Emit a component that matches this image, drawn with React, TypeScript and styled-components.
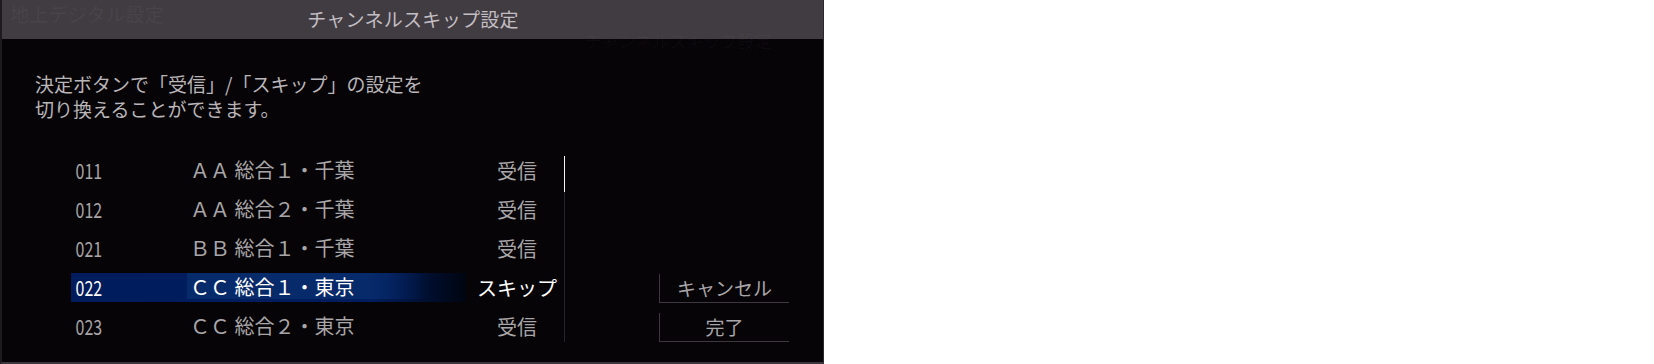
import React from "react";
import styled, { createGlobalStyle } from "styled-components";

const GlobalStyle = createGlobalStyle`
  html, body {
    margin: 0;
    padding: 0;
    background: #ffffff;
  }
  body {
    font-family: "Noto Sans CJK JP", "Noto Sans", sans-serif;
  }
`;

interface Channel {
  no: string;
  name: string;
  status: string;
}

const channels: Channel[] = [
  { no: "011", name: "ＡＡ 総合１・千葉", status: "受信" },
  { no: "012", name: "ＡＡ 総合２・千葉", status: "受信" },
  { no: "021", name: "ＢＢ 総合１・千葉", status: "受信" },
  { no: "022", name: "ＣＣ 総合１・東京", status: "スキップ" },
  { no: "023", name: "ＣＣ 総合２・東京", status: "受信" },
];

const Panel = styled.div`
  position: relative;
  width: 821px;
  height: 362px;
  background: #060406;
  border-left: 2px solid #1e1b1f;
  border-right: 1px solid #2c292d;
  border-bottom: 2px solid #3a363b;
  overflow: hidden;
`;

const Header = styled.div`
  position: relative;
  height: 39px;
  background: #413b42;
  padding-left: 1px;
  text-align: center;
  font-size: 19px;
  line-height: 37px;
  color: #c2bec2;
  letter-spacing: 0.3px;
`;

const GhostCrumb = styled.div`
  position: absolute;
  left: 8px;
  top: 1px;
  font-size: 19px;
  line-height: 26px;
  color: #49434a;
`;

const GhostTitle = styled.div`
  position: absolute;
  left: 583px;
  top: 28px;
  font-size: 17px;
  line-height: 26px;
  color: rgba(255, 255, 255, 0.03);
  pointer-events: none;
`;

const Description = styled.p`
  margin: 0;
  padding: 32px 0 0 33px;
  font-size: 19px;
  line-height: 25px;
  color: #b9b5b9;
`;

const Body = styled.div`
  display: flex;
  margin-top: 35px;
  height: 186px;
`;

const List = styled.div`
  display: flex;
  flex-direction: column;
  gap: 10px;
  margin-left: 69px;
  width: 493px;
`;

const Row = styled.div<{ $active: boolean }>`
  display: grid;
  grid-template-columns: 116px 283px 94px;
  height: 29px;
  align-items: center;
  color: ${(p) => (p.$active ? "#ffffff" : "#a9a6a9")};
  background: ${(p) =>
    p.$active
      ? "linear-gradient(90deg, #001c5c 0, #001d5e 300px, #000510 395px, transparent 395px)"
      : "transparent"};
`;

const Num = styled.span`
  display: inline-block;
  padding-left: 6px;
  font-size: 21px;
  line-height: 29px;
  transform: scaleX(0.76);
  transform-origin: left center;
`;

const Name = styled.span<{ $active: boolean }>`
  align-self: start;
  height: 26px;
  padding-left: 3px;
  font-size: 20px;
  line-height: 28px;
  white-space: nowrap;
  background: ${(p) =>
    p.$active
      ? "linear-gradient(90deg, #072a6b 0, #072a6b 180px, rgba(7, 42, 107, 0) 240px)"
      : "transparent"};
`;

const Status = styled.span`
  text-align: center;
  font-size: 20px;
  line-height: 29px;
  white-space: nowrap;
`;

const ScrollTrack = styled.div`
  width: 1px;
  height: 186px;
  background: #25232a;
`;

const ScrollThumb = styled.div`
  width: 1px;
  height: 36px;
  background: #f4f4f4;
`;

const Actions = styled.div`
  display: flex;
  flex-direction: column;
  justify-content: flex-end;
  gap: 10px;
  margin-left: 94px;
  width: 130px;
`;

const ActionButton = styled.div`
  box-sizing: border-box;
  height: 29px;
  border-left: 1px solid #3d383d;
  border-bottom: 1px solid #3d383d;
  text-align: center;
  font-size: 19px;
  line-height: 28px;
  color: #a9a6a9;
`;

export default function App() {
  return (
    <>
      <GlobalStyle />
      <Panel>
        <Header>
          <GhostCrumb>地上デジタル設定</GhostCrumb>
          チャンネルスキップ設定
        </Header>
        <GhostTitle>チャンネルスキップ設定</GhostTitle>
        <Description>
          決定ボタンで「受信」/「スキップ」の設定を
          <br />
          切り換えることができます。
        </Description>
        <Body>
          <List>
            {channels.map((c, i) => {
              const active = i === 3;
              return (
                <Row key={c.no} $active={active}>
                  <Num>{c.no}</Num>
                  <Name $active={active}>{c.name}</Name>
                  <Status>{c.status}</Status>
                </Row>
              );
            })}
          </List>
          <ScrollTrack>
            <ScrollThumb />
          </ScrollTrack>
          <Actions>
            <ActionButton>キャンセル</ActionButton>
            <ActionButton>完了</ActionButton>
          </Actions>
        </Body>
      </Panel>
    </>
  );
}
